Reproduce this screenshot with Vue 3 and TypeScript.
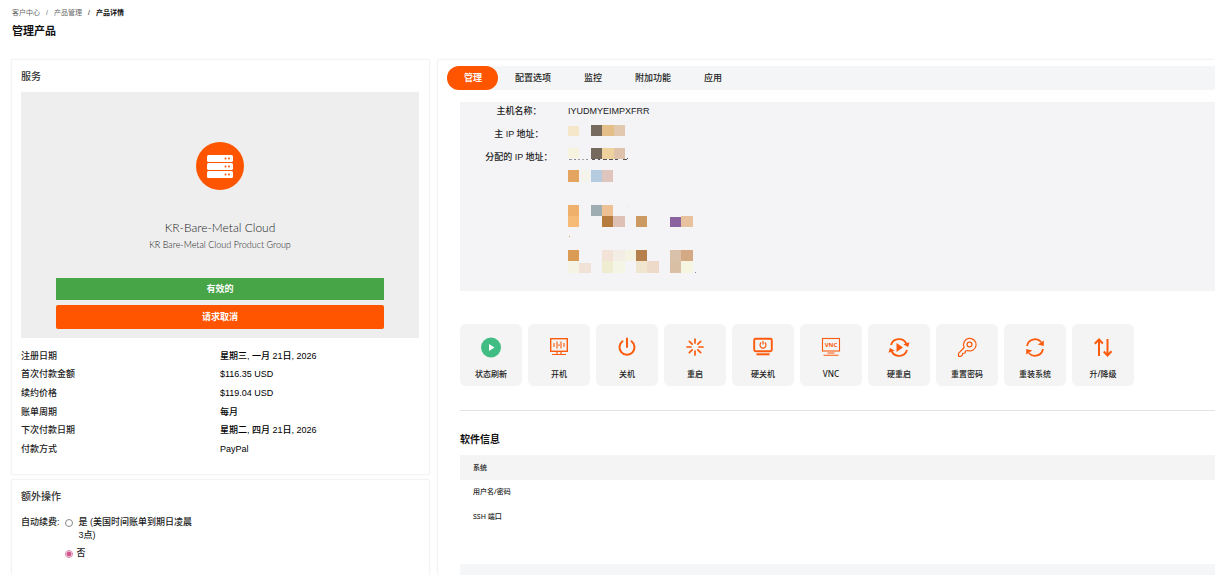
<script setup lang="ts">
import { ref } from 'vue'

type Block = [x: number, y: number, w: number, h: number, fill: string]

const details = [
  { label: '注册日期', value: '星期三, 一月 21日, 2026' },
  { label: '首次付款金额', value: '$116.35 USD' },
  { label: '续约价格', value: '$119.04 USD' },
  { label: '账单周期', value: '每月' },
  { label: '下次付款日期', value: '星期二, 四月 21日, 2026' },
  { label: '付款方式', value: 'PayPal' },
]

const tabs = ['管理', '配置选项', '监控', '附加功能', '应用']
const activeTab = ref('管理')
const autoRenew = ref('no')

const actions = [
  { icon: 'status', label: '状态刷新' },
  { icon: 'boot', label: '开机' },
  { icon: 'power', label: '关机' },
  { icon: 'restart', label: '重启' },
  { icon: 'hardoff', label: '硬关机' },
  { icon: 'vnc', label: 'VNC' },
  { icon: 'hardrestart', label: '硬重启' },
  { icon: 'key', label: '重置密码' },
  { icon: 'reinstall', label: '重装系统' },
  { icon: 'scale', label: '升/降级' },
]

const software = ['系统', '用户名/密码', 'SSH 端口']

const spokes = [0, 45, 90, 135, 180, 225, 270, 315]

const primaryBlocks: Block[] = [
  [0, 1, 11, 10, '#f5e8ca'], [23, 0, 11, 11, '#766a5e'],
  [34, 0, 12, 11, '#e3be86'], [46, 0, 11, 11, '#e3c8b0'],
]

const assignedBlocks: Block[] = [
  [0, 0, 11, 10, '#f6f3de'], [23, 0, 11, 11, '#766a5e'],
  [34, 0, 12, 11, '#eed19c'], [46, 0, 11, 11, '#dfc2ac'],
  [1, 11, 3, 1, '#9a9a9c'], [6, 11, 2, 1, '#8a8a8c'], [10, 11, 2, 1, '#9a9a9c'],
  [14, 11, 2, 1, '#aaaaac'], [18, 11, 2, 1, '#9a9a9c'], [24, 11, 3, 1, '#555557'],
  [30, 11, 2, 1, '#555557'], [35, 11, 4, 1, '#555557'], [41, 11, 4, 1, '#555557'],
  [47, 11, 3, 1, '#555557'], [55, 11, 4, 1, '#555557'], [59, 10, 1, 1, '#555557'],
  [0, 22, 11, 12, '#e3a55f'], [13, 22, 9, 12, '#f5f4ea'],
  [23, 22, 11, 12, '#b5cce0'], [34, 22, 11, 12, '#dfc5bd'],
  [0, 57, 11, 11, '#efb06c'], [23, 57, 11, 11, '#9dadb1'], [34, 57, 11, 11, '#edc194'],
  [0, 68, 11, 11, '#f6bb76'], [34, 68, 11, 11, '#b67b3e'], [45, 68, 12, 11, '#dfc0b5'],
  [68, 68, 11, 11, '#ca9a62'], [102, 69, 11, 10, '#8a629f'], [113, 68, 12, 11, '#e8c29e'],
  [59, 58, 1, 3, '#dceeee'], [1, 88, 1, 1, '#c89a5a'],
  [0, 102, 11, 11, '#da9c55'], [34, 102, 11, 11, '#f2e3d6'], [45, 102, 12, 11, '#f4ede6'],
  [57, 102, 11, 11, '#f5f3e2'], [68, 102, 11, 11, '#b6804c'],
  [102, 102, 11, 11, '#d9c1aa'], [113, 102, 12, 11, '#d4aa85'],
  [0, 113, 11, 12, '#f5f3e4'], [11, 115, 12, 10, '#f0e2d6'], [34, 113, 11, 12, '#efecd2'],
  [45, 113, 12, 12, '#f5f5e6'], [68, 113, 11, 12, '#f0e6d0'], [79, 113, 12, 12, '#eddac8'],
  [102, 113, 11, 12, '#d9bfa3'], [113, 113, 12, 12, '#f5f5e2'], [127, 124, 1, 1, '#7a8ab0'],
]
</script>

<template>
  <div class="page">
    <header class="head">
      <nav class="crumbs" aria-label="breadcrumb">
        <a href="#">客户中心</a><span>/</span><a href="#">产品管理</a><span class="dark">/</span><b>产品详情</b>
      </nav>
      <h1>管理产品</h1>
    </header>

    <div class="columns">
      <div class="side">
        <section class="card">
          <h2>服务</h2>
          <div class="product">
            <svg class="badge" viewBox="0 0 48 48" aria-hidden="true">
              <circle cx="24" cy="24" r="24" fill="#ff5500" />
              <g fill="#fff">
                <rect x="11" y="13" width="26" height="7" rx="1.5" />
                <rect x="11" y="21" width="26" height="7" rx="1.5" />
                <rect x="11" y="29" width="26" height="7" rx="1.5" />
              </g>
              <g fill="#ff5500">
                <circle cx="29.5" cy="16.5" r="1" /><circle cx="33" cy="16.5" r="1" />
                <circle cx="29.5" cy="24.5" r="1" /><circle cx="33" cy="24.5" r="1" />
                <circle cx="29.5" cy="32.5" r="1" /><circle cx="33" cy="32.5" r="1" />
              </g>
            </svg>
            <h3>KR-Bare-Metal Cloud</h3>
            <p>KR Bare-Metal Cloud Product Group</p>
            <div class="status">有效的</div>
            <button class="cancel" type="button">请求取消</button>
          </div>
          <table class="details">
            <tbody>
              <tr v-for="d in details" :key="d.label">
                <th scope="row">{{ d.label }}</th>
                <td>{{ d.value }}</td>
              </tr>
            </tbody>
          </table>
        </section>

        <section class="card open">
          <h2>额外操作</h2>
          <div class="renew" role="radiogroup" aria-labelledby="renew-title">
            <span id="renew-title">自动续费:</span>
            <div class="choices">
              <div class="choice wide">
                <input id="renew-yes" v-model="autoRenew" type="radio" name="renew" value="yes" />
                <label for="renew-yes">是 (美国时间账单到期日凌晨3点)</label>
              </div>
              <div class="choice">
                <input id="renew-no" v-model="autoRenew" type="radio" name="renew" value="no" />
                <label for="renew-no">否</label>
              </div>
            </div>
          </div>
        </section>
      </div>

      <section class="card open main">
        <div class="tabs" role="tablist">
          <button
            v-for="t in tabs"
            :key="t"
            type="button"
            role="tab"
            :aria-selected="t === activeTab"
            :class="{ active: t === activeTab }"
            @click="activeTab = t"
          >{{ t }}</button>
        </div>

        <div class="body">
          <table class="host">
            <tbody>
              <tr>
                <th scope="row">主机名称：</th>
                <td>IYUDMYEIMPXFRR</td>
              </tr>
              <tr>
                <th scope="row">主 IP 地址：</th>
                <td>
                  <svg width="60" height="12" shape-rendering="crispEdges" aria-hidden="true">
                    <rect v-for="(b, i) in primaryBlocks" :key="i" :x="b[0]" :y="b[1]" :width="b[2]" :height="b[3]" :fill="b[4]" />
                  </svg>
                </td>
              </tr>
              <tr>
                <th scope="row">分配的 IP 地址：</th>
                <td>
                  <svg width="130" height="126" shape-rendering="crispEdges" aria-hidden="true">
                    <rect v-for="(b, i) in assignedBlocks" :key="i" :x="b[0]" :y="b[1]" :width="b[2]" :height="b[3]" :fill="b[4]" />
                  </svg>
                </td>
              </tr>
            </tbody>
          </table>

          <div class="actions">
            <button v-for="a in actions" :key="a.icon" type="button">
              <svg viewBox="0 0 22 22" fill="none" stroke="#fc5a0c" stroke-width="1.5" aria-hidden="true">
                <template v-if="a.icon === 'status'">
                  <circle cx="11" cy="11.5" r="10" fill="#41bd84" stroke="none" />
                  <path d="M9 8v7l5.5-3.5z" fill="#fff" stroke="none" />
                </template>
                <template v-else-if="a.icon === 'boot'">
                  <rect x="2.7" y="2.7" width="16.6" height="12.6" stroke-width="1.4" />
                  <path d="M6 7v4M9 5.5v7M13 5.5v7M16 7v4M11 8.2v1.8" stroke-width="1.1" />
                  <path d="M9 15.5v2.5M13 15.5v2.5M4 18.5h14" stroke-width="1.2" />
                </template>
                <template v-else-if="a.icon === 'power'">
                  <path d="M6.5 5.3a7.5 7.5 0 1 0 9 0M11 2.5v8.5" stroke-width="2" stroke-linecap="round" />
                </template>
                <template v-else-if="a.icon === 'restart'">
                  <path
                    v-for="r in spokes"
                    :key="r"
                    d="M11 3v4"
                    :transform="`rotate(${r} 11 11)`"
                    stroke-width="1.7"
                    stroke-linecap="round"
                  />
                </template>
                <template v-else-if="a.icon === 'hardoff'">
                  <rect x="2.2" y="2.8" width="17.6" height="12.4" rx="1.5" stroke-width="1.9" />
                  <path d="M9.3 6.6a3 3 0 1 0 3.4 0M11 5v3.5" stroke-width="1.2" />
                  <path d="M4.5 18.3h13" stroke-width="2" />
                </template>
                <template v-else-if="a.icon === 'vnc'">
                  <rect x="2.5" y="2.5" width="17" height="12.5" stroke-width="1.1" />
                  <text x="11" y="11" text-anchor="middle" class="glyph">VNC</text>
                  <path d="M7.5 17h7M3.5 19.2h15" stroke-width="1.1" />
                </template>
                <template v-else-if="a.icon === 'hardrestart'">
                  <path d="M3 9a8.3 8.3 0 0 1 15.5-1M19 14a8.3 8.3 0 0 1-15.5 1" stroke-width="1.9" />
                  <path d="M21.5 6.3l-1.3 4.7-4.8-2.6zM.5 16.7l1.3-4.7 4.8 2.6zM8.500 7v9l6.500-4.500z" fill="#fc5a0c" stroke="none" />
                </template>
                <template v-else-if="a.icon === 'key'">
                  <path d="M8.200 11.500a6.300 6.300 0 1 1 3.300 3l-2 .500-.500 2-2.200.300-.400 1.800-1.500 1.200H2.500v-3z" stroke-width="1.200" stroke-linejoin="round" />
                  <circle cx="13.500" cy="8.500" r="2.400" stroke-width="1.200" />
                </template>
                <template v-else-if="a.icon === 'reinstall'">
                  <path d="M3 10a8.200 8.200 0 0 1 14.200-4M19 13a8.200 8.200 0 0 1-14.200 4" stroke-width="1.800" />
                  <path d="M19.800 4.500v5.500l-6-1.500zM2.200 18.500v-5.500l6 1.500z" fill="#fc5a0c" stroke="none" />
                </template>
                <template v-else>
                  <path d="M7 20V3.500M2.800 7.800L7 3.500l3.800 4M15.500 3v16.500M11.800 15.500l3.700 4 4-4.200" stroke-width="2" />
                </template>
              </svg>
              <span>{{ a.label }}</span>
            </button>
          </div>

          <h2 class="software-title">软件信息</h2>
          <table class="software">
            <tbody>
              <tr v-for="s in software" :key="s">
                <th scope="row">{{ s }}</th>
              </tr>
            </tbody>
          </table>
          <div class="band"></div>
        </div>
      </section>
    </div>
  </div>
</template>

<style>
html,
body {
  margin: 0;
  background: #fff;
}
</style>

<style scoped>
.page {
  box-sizing: border-box;
  min-height: 100vh;
  display: flex;
  flex-direction: column;
  padding: 8px 0 0 11px;
  font-family: 'Liberation Sans', 'Noto Sans CJK SC', sans-serif;
  font-size: 9px;
  line-height: 13px;
  color: #222;
}
h1,
h2,
h3,
p {
  margin: 0;
}
button {
  font: inherit;
  border: 0;
  padding: 0;
  cursor: pointer;
}
table {
  border-collapse: collapse;
}
th,
td {
  padding: 0;
  text-align: left;
  font-weight: 500;
}
.head {
  height: 51px;
  padding-left: 1px;
}
.crumbs {
  display: flex;
  gap: 6px;
  height: 10px;
  font-size: 7px;
  line-height: 10px;
  color: #666;
}
.crumbs a {
  color: #666;
  text-decoration: none;
}
.crumbs .dark,
.crumbs b {
  color: #111;
}
h1 {
  margin-top: 5px;
  font-size: 11px;
  line-height: 16px;
  font-weight: 700;
  color: #111;
}
.columns {
  flex: 1;
  display: grid;
  grid-template-columns: minmax(0, 7fr) minmax(0, 13fr);
  gap: 7px;
}
.side {
  display: flex;
  flex-direction: column;
  gap: 4px;
}
.card {
  box-sizing: border-box;
  border: 1px solid #f3f3f3;
  border-radius: 2px;
  box-shadow: 0 0 2px #f2f2f2;
  padding: 8px 10px 15px 9px;
}
.card.open {
  flex: 1;
  border-bottom: 0;
  padding-bottom: 0;
}
.card h2 {
  font-size: 10px;
  line-height: 17px;
  font-weight: 500;
  color: #333;
}
.product {
  display: flex;
  flex-direction: column;
  align-items: center;
  margin-top: 7px;
  padding: 50px 35px 9px;
  background: #eee;
}
.badge {
  width: 48px;
  height: 48px;
}
.product h3 {
  margin-top: 30px;
  font-family: Lato, sans-serif;
  font-size: 12px;
  line-height: 16px;
  font-weight: 300;
  color: #222;
}
.product p {
  margin-top: 2px;
  font-family: Lato, sans-serif;
  font-size: 9px;
  line-height: 14px;
  font-weight: 300;
  color: #222;
}
.status,
.cancel {
  width: 100%;
  color: #fff;
  font-weight: 700;
  text-align: center;
}
.status {
  margin-top: 26px;
  line-height: 22px;
  background: #47a447;
}
.cancel {
  margin-top: 5px;
  height: 24px;
  border-radius: 2px;
  background: #ff5500;
}
.details {
  width: 100%;
  height: 112px;
  margin-top: 9px;
  table-layout: fixed;
}
.details td {
  color: #000;
}
.renew {
  display: flex;
  gap: 5px;
  margin-top: 11px;
  font-weight: 500;
}
.choices {
  display: flex;
  flex-direction: column;
  gap: 5px;
}
.choice {
  display: flex;
  align-items: flex-start;
  gap: 4px;
}
.choice.wide {
  gap: 6px;
}
.choice label {
  max-width: 118px;
}
.choice input {
  flex: none;
  appearance: none;
  box-sizing: border-box;
  width: 8px;
  height: 8px;
  margin: 3px 0 0;
  border: 1px solid #888;
  border-radius: 50%;
}
.choice input:checked {
  border-color: #d987ac;
  background: radial-gradient(#d0588c 0 2px, #fff 3px);
}
.main {
  display: flex;
  flex-direction: column;
  padding: 6px 0 0 9px;
  border-right: 0;
}
.tabs {
  display: flex;
  height: 24px;
  background: #f4f5f6;
  border-radius: 12px 0 0 12px;
}
.tabs button {
  padding: 0 16px 0 17px;
  border-radius: 12px;
  background: none;
  color: #222;
  font-weight: 500;
}
.tabs .active {
  background: #ff5500;
  color: #fff;
  font-weight: 700;
}
.body {
  flex: 1;
  display: flex;
  flex-direction: column;
  margin: 12px 0 0 13px;
}
.host {
  width: 100%;
  height: 189px;
  background: #f4f4f7;
}
.host th,
.host td {
  height: 23px;
  vertical-align: top;
  line-height: 18px;
}
.host th {
  width: 108px;
  padding: 0 0 0 10px;
  box-sizing: border-box;
  text-align: center;
}
.host td svg {
  display: block;
}
.host tr:last-child td,
.host tr:last-child th {
  height: auto;
}
.actions {
  display: flex;
  flex-wrap: wrap;
  gap: 6px;
  padding: 33px 0 24px;
  border-bottom: 1px solid #e3e3e3;
}
.actions button {
  display: flex;
  flex-direction: column;
  align-items: center;
  box-sizing: border-box;
  width: 62px;
  height: 62px;
  padding-top: 12px;
  border-radius: 6px;
  background: #f4f4f4;
  color: #222;
  font-family: 'Noto Sans', 'Noto Sans CJK SC', sans-serif;
  font-size: 8px;
  line-height: 12px;
  font-weight: 500;
}
.actions svg {
  width: 22px;
  height: 22px;
  margin-bottom: 10px;
}
.glyph {
  fill: #fc5a0c;
  stroke: none;
  font-size: 6px;
  font-weight: 700;
}
.card .software-title {
  margin-top: 20px;
  font-weight: 700;
  color: #111;
}
.software {
  width: 100%;
  height: 74px;
  margin-top: 7px;
  font-family: 'Noto Sans', 'Noto Sans CJK SC', sans-serif;
  font-size: 7px;
}
.software th {
  padding-left: 13px;
}
.software tr:first-child {
  background: #f4f4f4;
}
.band {
  flex: 1;
  min-height: 11px;
  margin-top: 35px;
  background: #f5f6f7;
}
</style>
